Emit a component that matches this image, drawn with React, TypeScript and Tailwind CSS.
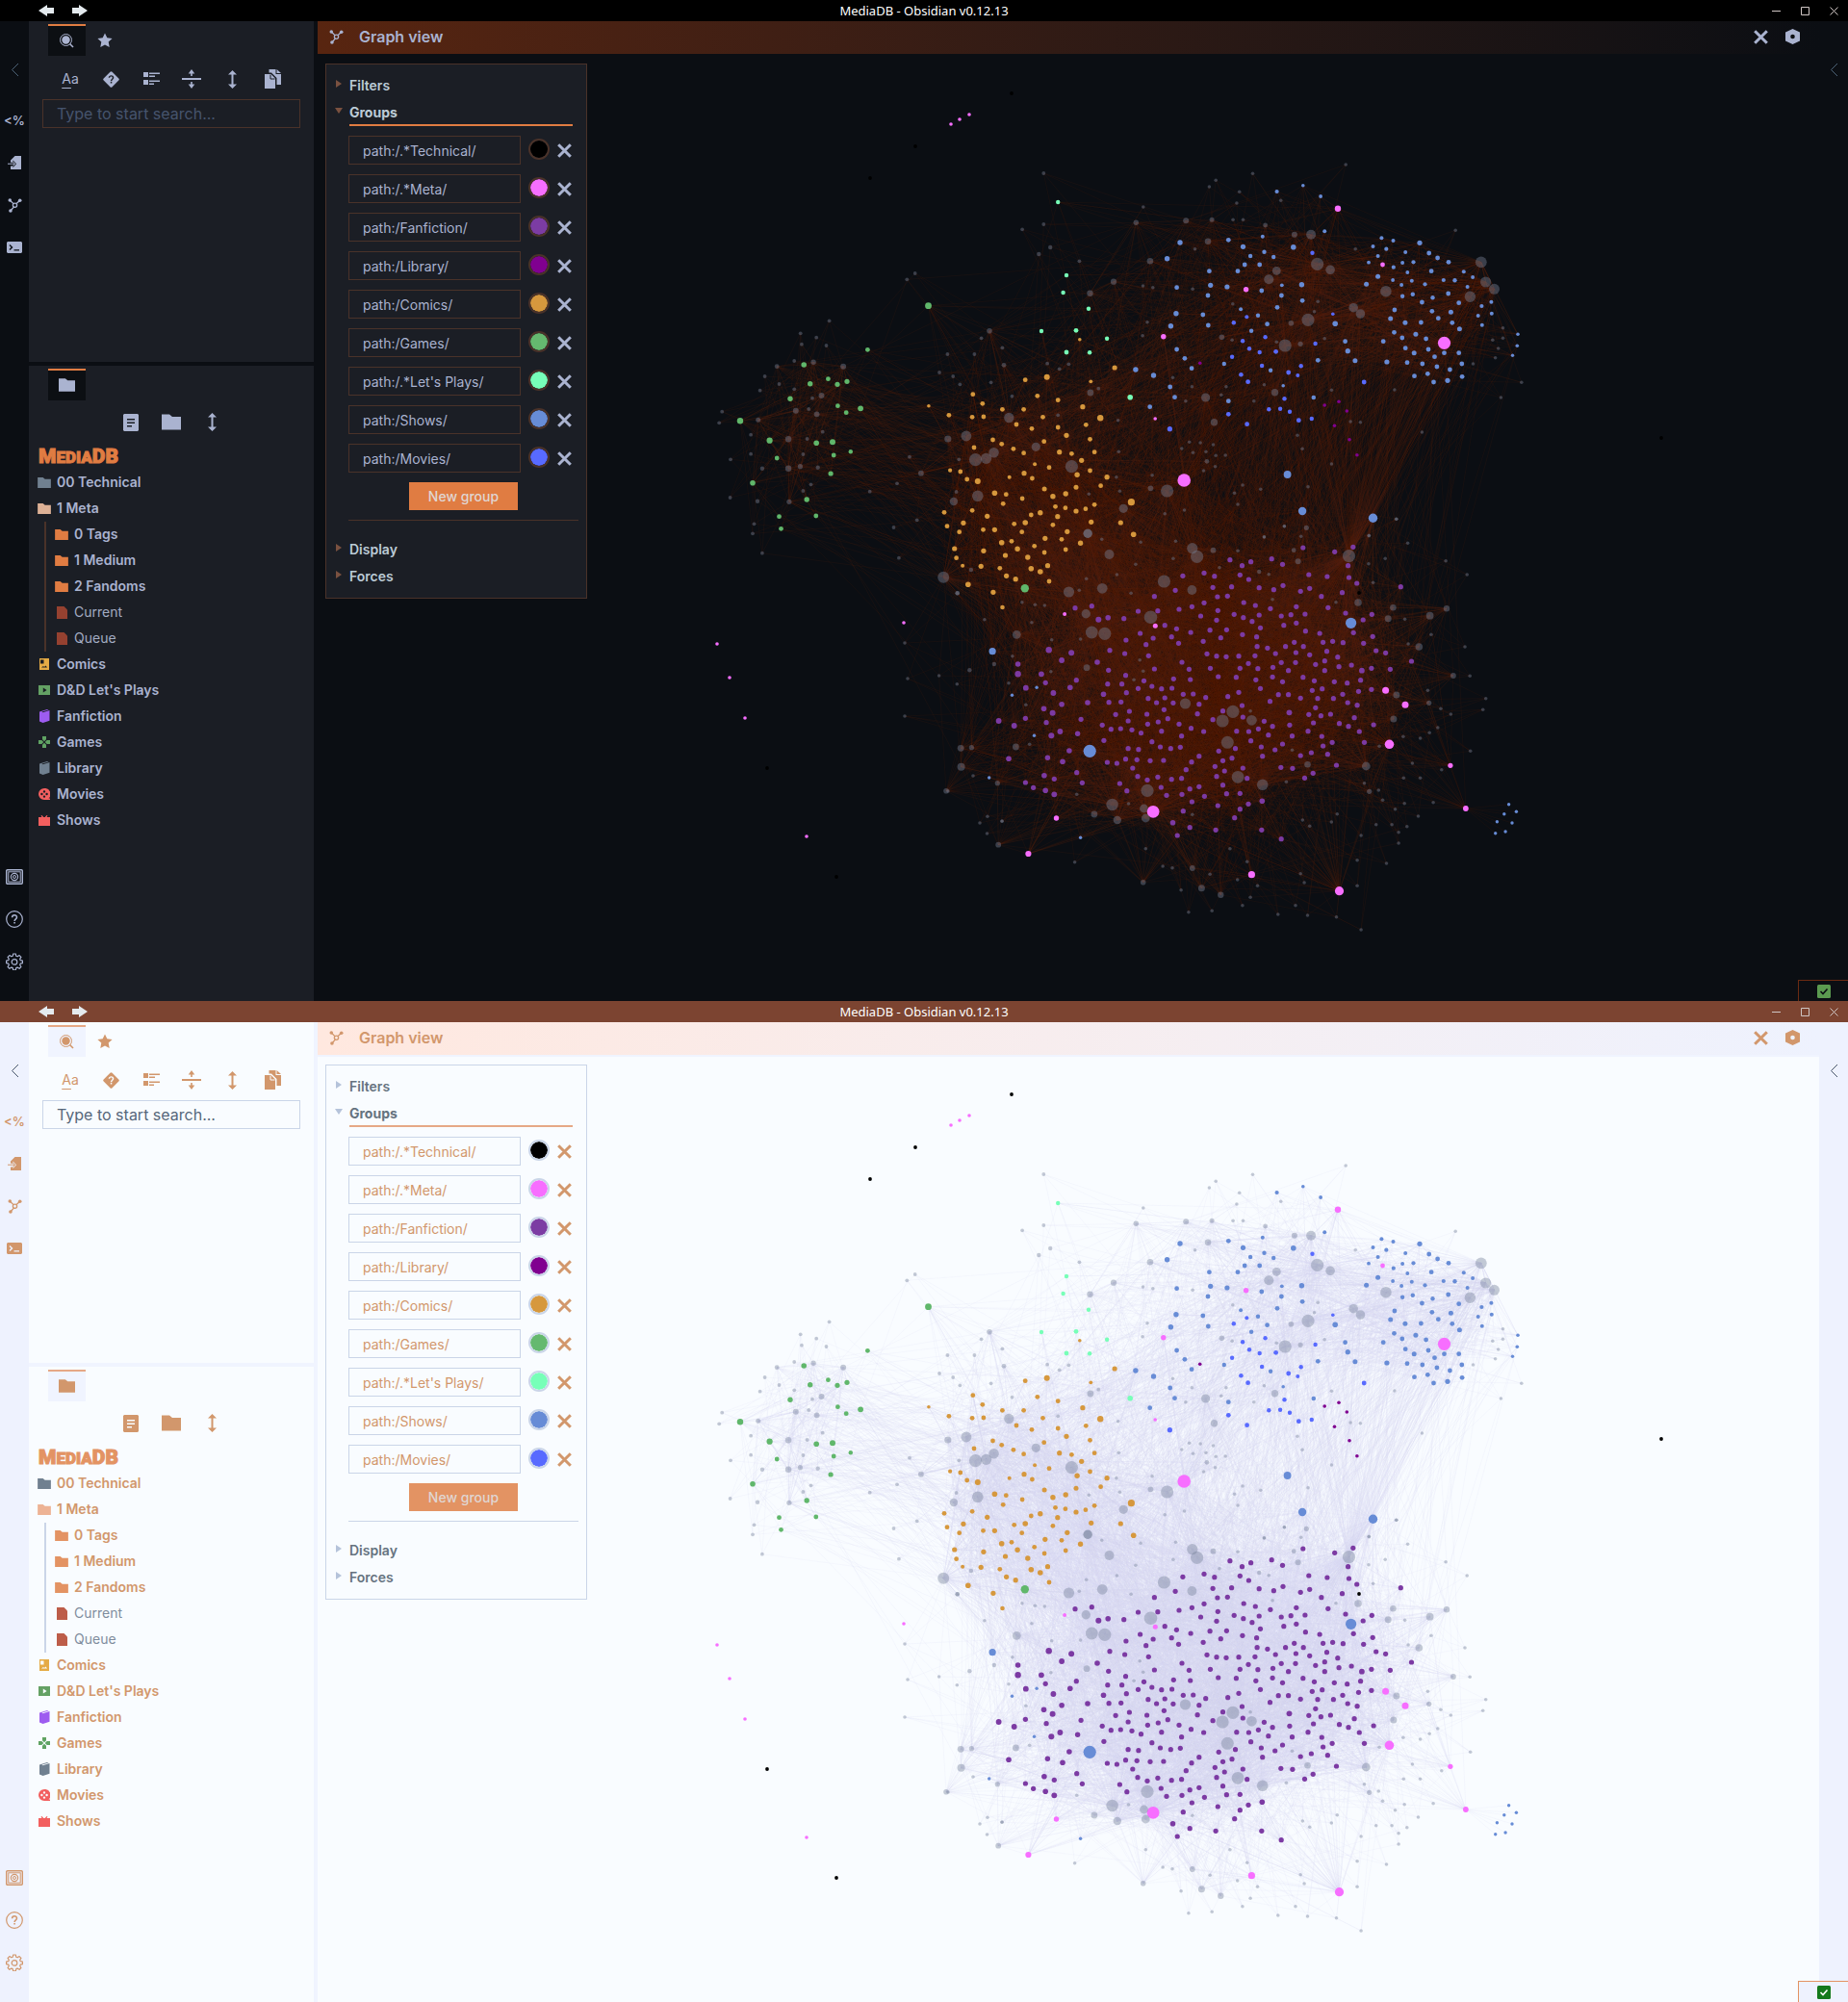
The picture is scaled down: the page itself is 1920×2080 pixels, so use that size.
import React from "react";

/* ------------------------------------------------------------------ */
/* Graph data                                                          */
/* ------------------------------------------------------------------ */

type Kind =
  | "technical"
  | "meta"
  | "fanfiction"
  | "library"
  | "comics"
  | "games"
  | "plays"
  | "shows"
  | "movies"
  | "plain";

interface GraphNode {
  x: number;
  y: number;
  r: number;
  kind: Kind;
}

interface Patch {
  origin: [number, number];
  unit: [number, number];
  sets: [Kind, number, string][];
}

/* Every patch of the vault keeps its own origin and units per pixel; nodes read "x,y" or "x,y,radius". */
const patches: Patch[] = [
  {
    origin: [0, 0],
    unit: [1, 1],
    sets: [
      ["meta", 1.8, "988,129 997,124 1007,119 745,669 758,704 774,746 838,869 939,647"],
      ["technical", 1.9, "1051,97 951,152 904,185 1726,455 797,798 869,911 1412,616"],
      ["plain", 1.8, "940,668 943,705 940,744 1011,806 985,822 1018,855 1041,853"],
    ],
  },
  {
    origin: [720, 140],
    unit: [2.6133, 3],
    sets: [
      [
        "games",
        2.4,
        "128,892,3.2 162,1085,2.8 208,953,3.1 228,1008 234,1190 239,1228 264,823,2.7 301,717,2.8 318,776,2.7 367,761 392,778,2.6 418,769,2.6 393,845 416,866 455,853,2.9 474,670 639,533,3.4 335,961,2.8 379,958,3 382,999 428,988,2.2 374,1056,2.6 309,1137,2.7 334,1188 901,1414,4.2",
      ],
      [
        "plays",
        2.2,
        "991,210 1014,438 1005,492 1074,542 946,612 1040,610,2.4 1124,635 1014,678,2.4 1077,679 1187,818,2.8",
      ],
      [
        "comics",
        2.4,
        "640,845,1.8 695,874 760,809 786,838 758,880 789,879 840,856 898,856 902,764 961,755,3 935,814 991,827 950,880 878,903 920,916 991,912 1050,638,1.8 1145,726,2.6 1080,769,1.9 1058,848,2.6 1106,883,3.2 1067,904 1014,937,2.6 1078,949 814,951 838,964 763,975 870,979 898,992 953,956 995,989,2.6 1028,994 1090,989 1055,1015,2.6 928,1027,2 967,1037 1078,1047 698,1046,2.1 726,1050 744,1074 773,1080,3 899,1055,2.6 921,1071 859,1067,2 1043,1060,2.7 1124,1067,2.6 1107,1094 1040,1099,2.5 954,1104,2.5 819,1117,2.8 850,1121 894,1134 977,1127,2.7 1012,1119,2.7 842,1150 984,1159 1011,1163 1040,1173,2.6 1066,1166 1090,1153 1190,1145,3.6 682,1177 758,1171 799,1189,2.6 943,1178,2.7 918,1185 990,1190,2.6 690,1220 734,1210,2.6 902,1209,2.8 872,1213 977,1216 1081,1207,2.6 1161,1209,2.6 1196,1246,2.8 723,1238 788,1231 819,1231,2.6 893,1238 1016,1237,2.6 956,1258,2.6 1001,1261 865,1267 838,1271,2.8 1052,1273,2.7 927,1282 881,1291,2.7 1012,1293 710,1290,2.6 789,1297,2.6 954,1302 848,1311,2.6 909,1317,2.7 715,1319 732,1343,2 782,1345,2.6 833,1351 963,1343,2.6 918,1352,2.8 943,1362,2.8 851,1375,2.6 876,1385,2.6 967,1392 747,1402,2.8 815,1426,2.6",
      ],
      [
        "plain",
        1.9,
        "952,120 952,279 894,295 970,351,2.2 939,372,2.2 603,432 581,451 370,580 292,619 335,632 295,653 362,657 275,705 327,709,2.7 228,722,2.4 408,722,3 195,753 234,777 182,797 275,793 324,821 349,813,3 314,855 279,860,3 336,871,2.9 79,863 71,898 177,889,2.5 157,935 352,926 259,949,3.2 310,948 157,995 299,996 102,1012 188,1040,2.2 259,1040,3.2 291,1034,2.6 339,1037,2.2 320,1090 299,1110 101,1131 175,1142,2.2 261,1144,2.6 166,1213 162,1243 188,1304 480,1112 554,1087 588,1004 619,1055,2.9 608,1201 545,1224 559,1319 805,611,2.8 783,634 840,664 691,684 764,684 844,718,2.4 962,713 669,741 706,753 725,778 809,772 866,815 991,874 858,882,5.2 742,939,5.4 692,948,3.6 817,991,5.2 796,1009,5.6 767,1013,6.6 931,973,4.6 1028,1034,6.6 722,1012 715,1113 773,1126,5.8 708,1143,4.2 680,1379,6 718,1429,2.3 755,1356,2.2 1142,458,3.1 1078,494,3.2 1049,394 1203,274,2.7 1241,394,3.3 1079,804,3.4 1101,791 1020,715 995,730",
      ],
    ],
  },
  {
    origin: [1100, 140],
    unit: [2.9037, 3],
    sets: [
      [
        "shows",
        2.4,
        "658,177,2.1 737,158,1.8 790,192,1.9 802,301,2 615,317,2 708,350,2.8 620,365,2.2 648,381,2.2 578,378,2.2 556,349,2.6 512,328 366,336,2.7 327,386,2.7 561,405 606,405 540,425 454,425 458,469,2.6 508,474,2.6 356,476 450,501 612,486 673,469,1.9 672,501 733,467,2.7 735,517 659,538 549,544,2 601,563,2.2 629,590 581,611,2.2 354,557,2.7 435,561 338,596,2.7 451,594 356,669 380,697 401,728 232,732,2.7 286,750,2.7 336,786 350,818 275,848 499,714,2.2 639,734,2.2 677,782,1.8 512,830 769,819,2.3 834,589,2.8 864,644 872,674,2.6 894,704,2.5 782,703 974,322,2 1009,330,2 948,348,2 988,356,2.1 963,378,2 935,398,1.9 1046,366,2 1089,337,2.6 1117,369 1143,384 1176,397 1070,397,2.1 1037,399,2 1010,413,2.1 1052,429,1.9 1124,425 1222,427,2 1249,444,2 963,442,2.5 1008,453,1.9 1065,455,2 1034,468,2 1105,466,2.1 1161,453,2.1 1195,454,2.2 1233,474,2 928,466,2.5 1037,503,2.2 1068,497,2.2 1096,522 1128,508,2.2 1175,495 1207,524 1276,534,2.1 1305,521,2 1306,557,2 1265,564,2 1277,593,2 1013,546 1126,550 1183,553,2.5 1001,573,2.5 1045,586,2.5 1093,585 1145,572 1187,586 1209,605,2.5 1012,616 1077,622,2.5 1036,633 1108,636 979,644 1046,665 1115,669 1072,680,2.5 1163,680 1207,680 1134,692 990,708,2.6 1051,710 1097,714 1141,723 1216,714 1180,732 1113,745 1073,752 1217,754 1131,771 1173,766,2.6 1385,622,1.8 1383,658,1.8 1369,688,1.7 690,1059,3.9 735,1173,4.2 948,1195,4.7",
      ],
      [
        "movies",
        2.2,
        "765,368 827,559,1.8 567,568,2 528,586 623,631 555,643 575,667 606,678 655,676,2.4 523,692 774,651 613,720 731,721 693,741,2.4 721,750,2 550,748,2.3 571,770,2.4 681,823 634,856 668,854 697,863 724,890,2.4 763,885,2.2 512,871,2.4 568,902,2.4 335,917,2.6 921,771,2.4",
      ],
      ["library", 1.8, "426,712 802,843 845,832 869,861 832,907 877,950 900,998"],
      [
        "meta",
        2.2,
        "842,230,3.2 565,482,2.7 977,405,2.4 316,629,2.7 291,885,1.8 1163,649,6.6 378,1077,6.8",
      ],
      [
        "plain",
        1.8,
        "866,93 585,121 474,142 454,162 545,178 537,213 670,205 255,225 384,268,3 462,265,2.5 526,265 556,265 623,282,2.4 711,311,3 761,311,5 450,332,3.3 411,356 895,356 1197,298 780,403,6.6 819,421,4.8 657,424,4.4 634,451,5 987,488,5.8 889,539,4.8 910,558,4.8 1274,397,5.9 1288,459,5.6 1314,481,5.5 1241,505,5.7 752,577,6.6 683,657,6.6 701,587,2.8 771,551 782,520 525,527 729,652,2.6 657,646 802,635 492,631,2.8 523,640 267,584 253,626 254,471 284,476 404,481 1340,602 1340,634 1309,640 1326,666 1317,695 1250,714 1396,772 1334,819 1096,927 1013,795 823,796 652,803,3.7 620,779 589,830 505,785 490,811 443,819,4.6 383,830 402,785 344,757 469,896,3.7 179,890 181,988 371,978 394,958 427,960 466,966 405,991 444,988 474,1000 503,999 447,1018,2.4 472,1034 437,1047 282,1061 174,1067 184,1111 277,1102,2.9 327,1110,6.6 195,1165,4.6 379,1170 320,1181 555,1092 609,1105 530,1117 540,1152 752,1097 720,937 735,979 823,1026 910,896 880,894 681,1220 747,1225,2.6 731,1252 620,1253 88,1243,4.7 1018,1198 936,1250 91,1120",
      ],
    ],
  },
  {
    origin: [960, 520],
    unit: [2.3059, 3],
    sets: [
      ["comics", 2.3, "188,333"],
      [
        "shows",
        1.7,
        "1023,382,5.6 397,781,6.6 164,470,3.6 270,583 211,607 264,733 156,864 375,1051 1401,947 1419,970 1390,977 1373,1001 1409,1005 1369,1037 1393,1032",
      ],
      [
        "meta",
        2.7,
        "337,354,2 554,391,2.5 1106,592,3.5 1153,637,3.5 1115,760,4.8 1261,826,2.6 1298,960,2.9 549,970,6.4 317,990 250,1101,3.1 785,1166,3.6 995,1217,4.6",
      ],
      [
        "fanfiction",
        2.6,
        "908,147 1028,145 984,160 733,185 783,191 833,182 762,203 859,199 1016,203 620,235 671,226 696,236 757,232 778,246 922,231 966,237 1018,240 1037,258 1142,269 552,299 602,280 692,271 737,269 803,272 860,265 838,278 924,274 902,283 952,299 1002,287 703,300 727,298 671,319 766,318 794,327 611,339 642,331 704,343 830,337 892,331 968,334 362,335 402,329 513,345 560,344 663,360 743,355 765,365 803,357 856,360 879,356 913,354 1010,351 1073,355 418,371,3 441,365,2.8 479,368 701,373 786,377 862,389 892,382 1052,372 577,389 605,400 806,397 639,411 685,404 725,403 763,418 797,425 914,407 948,414 1029,412 1075,424 518,414 593,425 549,429 711,428 669,439 610,445 484,435 532,449 887,442 956,442 979,439 1004,443 1053,445 798,455 823,460 866,455 909,455 299,466,3.2 353,475,3 445,467 481,477 538,484 678,478 701,485 724,487 754,485 793,484 842,477 891,474 924,481 965,470 991,488 1083,468 1106,475 1168,501 330,498,2.9 415,504,2.8 225,510,2.8 225,541,3.2 281,541,2.9 618,504 777,508 856,505 890,505 938,511 960,500 442,529 552,525 635,526 686,523 757,523 800,524 836,520 873,530 994,518 1024,513 1049,530,2.9 1072,523 1117,526 960,530 365,560 483,545 527,562 598,556 638,558 705,549 748,551 795,559 835,550 859,565 908,551 935,562 983,565 1014,569 1046,560 291,568 244,584,2.9 350,583,2.8 440,572 474,572 513,586 546,579 569,587 594,585 806,586 930,592 954,587 1072,589 1041,595 310,600,2.9 430,604,2.8 485,599 621,604 645,603 675,614 728,611 754,598 849,605 873,605 902,616 943,617 981,617 1003,604 330,635,2.8 392,630,2.8 443,629 472,628 537,617 577,615 557,630 597,631 659,635 762,639 829,626 1015,630 1038,638 287,649,2.8 308,662,3 459,667 492,657 534,666 575,652 655,665 716,656 875,661,2.9 922,667 938,646 951,671 974,666 243,679 179,687,2.9 216,702,2.9 293,692 376,682 489,687 561,690 584,680 692,683 764,675 815,688 1031,677 427,700 448,713 471,711 498,715 536,697 611,697 640,710 801,712 835,704 876,700 933,693 995,695 1017,704 1077,699 326,720,2.9 305,733,3 368,727,2.7 520,725 569,719 670,720 749,719 778,720 920,719 1043,720 825,731 882,734 953,735 431,748 546,752 617,734 783,749 859,759 1055,754 978,754 956,765 348,780,2.8 489,773 514,776 566,768 591,773 614,769 706,781 746,773 808,768 841,777 928,786 967,791 902,795 811,797 203,805,2.8 296,802,2.7 332,814,2.8 439,816 462,819 483,806 510,808 542,811 574,810 659,797 641,815 738,803 716,811 500,834 628,839 697,829 720,843 764,834 855,832 883,835 988,825 932,850 912,865 288,857,2.8 312,868 366,848 512,860 535,871 560,862 593,869 617,866 701,860 774,866 243,879 262,895 291,904,2.8 312,916,2.9 379,880 469,882 486,905 568,894 581,919 618,916 637,899 659,892 716,887 725,914 757,913 672,922 642,939 704,951 777,946 810,937,2.8 757,962 621,968 596,1004,2.8 637,1019 744,989 699,1027 809,1027 607,1044 856,1055",
      ],
      [
        "plain",
        1.8,
        "643,149,5.6 654,175,6.6 575,252,6.6 642,279,4.9 1018,173,6.6 444,168,5 427,274,5.4 347,285,5.6 392,103,4.6 388,353,4.7 543,364,6.8 402,411,6.4 433,415,6.6 222,418,4.4 390,521,3.4 626,633,5.6 740,658,6.6 715,687,6.6 785,685,5.4 727,754,6.5 752,862,6.4 811,886,5.8 535,904,6.6 451,948,6.2 527,960,4.4 531,990,4.4 463,996,4.2 408,978,3.4 88,772,3.4 114,770,2.6 89,830,4 53,905,2.8 220,768,3.4 176,881,2.6 178,1073,2.9 919,823,3.3 1059,828,4.4 1067,907,2.6 1040,318,3.8 1124,334,3.3 1112,368,3.5 1212,359,3.9 1252,337,3.2 1186,456,3.8 1268,546,2.9 1132,606,3.5 1210,631,2.6 1125,681,3.5 643,1146,2.9 525,1190,2.8 665,1208,3.5 711,1229,3.2 693,155,2.9 896,190,3 886,155,2.4 803,222,2.2 80,289,2.2 426,121 519,130 597,181 603,127 507,199 462,231 389,244 372,280 496,289 266,325 289,327 235,317 145,371 258,380 306,434 375,432 212,485 168,510,2.2 109,529,2.2 36,546 79,572 203,569 304,533 517,497 525,532 503,559 244,637 253,760 366,916 152,985 187,1000 151,1038 361,1127 531,1085 572,1140 595,1145 685,1165 733,1085 774,1126 751,1182 799,1201 782,1237 763,1262 690,1279 634,1283 616,1214 902,1163 911,1191 890,1262 848,1290 919,1293 988,1298 1047,1338 1038,1121 1108,1131 1038,1201 1137,1068 1137,1034 1157,1016 1121,1010 1083,1010 1047,1044 990,977 976,1002 924,1015 907,996 868,877 882,778 1055,881 1089,903 1099,934 1129,962 1151,944 1184,984 1220,941 1149,865 1189,865 1170,819 1240,839 1309,781 1189,741 1148,736 1211,724 1231,708 1262,666 1238,649 1207,592 1308,547 1346,617 1339,652 1296,456 1215,418 1160,447 1152,370 1301,231 1250,188 1159,133 1105,181 1065,197 1132,58 1066,109 1076,256 987,317 835,308 826,230 708,209 863,80 752,157 815,114 1091,766 782,656 490,945 643,979",
      ],
    ],
  },
];

const nodes: GraphNode[] = patches.flatMap(({ origin, unit, sets }) =>
  sets.flatMap(([kind, base, list]) =>
    list.split(" ").map((entry) => {
      const [x, y, r] = entry.split(",").map(Number);
      return {
        x: Math.round((origin[0] + x / unit[0]) * 10) / 10,
        y: Math.round((origin[1] + y / unit[1]) * 10) / 10,
        r: r || base,
        kind,
      };
    }),
  ),
);

const fanOut: Record<Kind, number> = {
  technical: 0,
  meta: 20,
  fanfiction: 22,
  library: 6,
  comics: 20,
  games: 8,
  plays: 8,
  shows: 12,
  movies: 10,
  plain: 4,
};

/* Deterministic links: notes point at their neighbours and at hubs further away, so crowded regions fill in. */
function buildLinks(): string[] {
  let seed = 20210;
  const random = () => {
    seed = (seed * 1664525 + 1013904223) % 4294967296;
    return seed / 4294967296;
  };
  const linked = nodes.slice(15);
  const hubs = linked.filter((n) => n.r >= 4.2);
  const mids = linked.filter((n) => n.r >= 2.5);
  const pick = (from: GraphNode, pool: GraphNode[], reach: number) => {
    const weights = pool.map((p) =>
      p === from ? 0 : p.r * Math.exp(-Math.hypot(p.x - from.x, p.y - from.y) / reach),
    );
    let mark = random() * weights.reduce((a, b) => a + b, 0);
    let i = 0;
    while (i < pool.length - 1 && (mark -= weights[i]) > 0) i++;
    return pool[i];
  };
  const near = (x: number, y: number) =>
    linked.find((n) => Math.abs(n.x - x) < 1 && Math.abs(n.y - y) < 1);
  const segment = (a: GraphNode, b: GraphNode) => `M${a.x} ${a.y}L${b.x} ${b.y}`;
  const gate = near(1522.9, 840);
  const paths = linked.map((node) => {
    if (gate && node.x > 1545 && node.y > 800) return segment(node, gate);
    const leaf = node.kind === "plain" && node.r < 2.4;
    const far = node.x < 900 ? 8 : leaf ? 4 : 3;
    const count = node.kind === "plain" && !leaf ? 22 : fanOut[node.kind];
    let d = "";
    for (let i = 1; i <= count; i++) {
      d += segment(node, i % far === 0 ? pick(node, hubs, 150) : pick(node, mids, leaf ? 60 : 80));
    }
    return d;
  });
  const anchor = near(1401.5, 577.7);
  if (anchor) {
    linked
      .filter((n) => n.y < 400 && n.x > 1330 && n.r > 1.9)
      .forEach((n) => paths.push(segment(anchor, n)));
    linked
      .filter((n) => n.kind === "fanfiction")
      .forEach((n, i) => i % 2 === 0 && paths.push(segment(anchor, n)));
  }
  return paths;
}

const links = buildLinks();

const fills: Record<Kind, string> = {
  technical: "fill-black",
  meta: "fill-[#f76eff]",
  fanfiction: "fill-[#7c3aa3]",
  library: "fill-[#800090]",
  comics: "fill-[#d6983d]",
  games: "fill-[#60b76b]",
  plays: "fill-[#77ffb8]",
  shows: "fill-[#678cd6]",
  movies: "fill-[#586aff]",
  plain: "fill-[var(--node)]",
};

function Graph() {
  return (
    <svg
      role="img"
      aria-label="Graph of linked notes"
      viewBox="330 58 1560 982"
      preserveAspectRatio="xMidYMid slice"
      className="absolute inset-0 h-full w-full"
    >
      <g fill="none" className="stroke-[var(--link)]" strokeWidth="1">
        {links.map((d, i) => (
          <path key={i} d={d} />
        ))}
      </g>
      {nodes.map((n, i) => (
        <circle key={i} cx={n.x} cy={n.y} r={n.r} className={fills[n.kind]} />
      ))}
    </svg>
  );
}

/* ------------------------------------------------------------------ */
/* Icons                                                               */
/* ------------------------------------------------------------------ */

interface IconProps {
  w: number;
  h: number;
  box?: string;
  className?: string;
  children: React.ReactNode;
}

function Icon({ w, h, box, className, children }: IconProps) {
  return (
    <svg
      width={w}
      height={h}
      viewBox={box ?? `0 0 ${w} ${h}`}
      fill="currentColor"
      aria-hidden="true"
      className={className ?? "shrink-0"}
    >
      {children}
    </svg>
  );
}

const ArrowLeft = () => (
  <Icon w={16} h={12}>
    <path d="M0 6 9 0v3h7v6H9v3z" />
  </Icon>
);
const ArrowRight = () => (
  <Icon w={16} h={12}>
    <path d="M16 6 7 0v3H0v6h7v3z" />
  </Icon>
);
const Chevron = () => (
  <Icon w={9} h={15}>
    <path d="M8 1 1.500 7.500 8 14" fill="none" stroke="currentColor" />
  </Icon>
);
const SearchIcon = () => (
  <Icon w={15} h={15}>
    <circle cx="6.500" cy="6.500" r="4.200" />
    <circle cx="6.500" cy="6.500" r="6" fill="none" stroke="currentColor" />
    <path d="M10.500 10.500 14 14" stroke="currentColor" strokeWidth="1.600" />
  </Icon>
);
const StarIcon = () => (
  <Icon w={16} h={16}>
    <path d="m8 .4 2.300 4.800 5.300.7-3.900 3.600 1 5.400L8 12.500l-4.700 2.400 1-5.400L.4 5.900l5.300-.7z" />
  </Icon>
);
const QueryIcon = () => (
  <Icon w={17} h={17}>
    <path
      fillRule="evenodd"
      d="M7.400.7a1.600 1.600 0 0 1 2.200 0l6.700 6.700a1.600 1.600 0 0 1 0 2.200l-6.700 6.700a1.600 1.600 0 0 1-2.200 0L.7 9.600a1.600 1.600 0 0 1 0-2.200zM5.700 6.800h1.500c0-1.700 2.600-1.600 2.600 0 0 1.300-2 1.400-2 3.400h1.500c0-1.500 2-1.700 2-3.500 0-3.300-5.600-3.300-5.600.1zm2.100 4.300v1.500h1.500v-1.500z"
    />
  </Icon>
);
const ResultsIcon = () => (
  <Icon w={18} h={16}>
    <path d="M1 1h5v5H1zM1 9h5v5H1zM7 1.500h11V3H7zM7 4.500h6V6H7zM7 9.500h11V11H7zM7 12.500h5V14H7z" />
  </Icon>
);
const SplitIcon = () => (
  <Icon w={20} h={20}>
    <path d="M0 9h20v2H0zM9.200 7V4.500H6.700L10 0l3.300 4.500h-2.500V7zM9.200 13v2.500H6.700L10 20l3.300-4.500h-2.500V13z" />
  </Icon>
);
const SortIcon = () => (
  <Icon w={11} h={19}>
    <path d="M4.500 4.500H1L5.500 0 10 4.500H6.500v10H10L5.500 19 1 14.500h3.500z" />
  </Icon>
);
const CopyIcon = () => (
  <Icon w={17} h={20}>
    <path d="M0 5h6.500L11 9.500V20H0z" />
    <path d="M4.500 3.500V0h7v5h5.500v11h-4.500V9L7 3.500zM12.500 0 17 4h-4.500z" />
    <path d="M6 5.500v4.500h4.500" className="stroke-[var(--side)]" fill="none" />
  </Icon>
);
const FolderIcon = ({ w = 14, h = 11 }: { w?: number; h?: number }) => (
  <Icon w={w} h={h} box="0 0 20 16">
    <path d="M0 0h8l3 2.500h9V16H0z" />
  </Icon>
);
const NoteIcon = () => (
  <Icon w={16} h={18}>
    <path
      fillRule="evenodd"
      d="M1 0h14l1 1v16l-1 1H1l-1-1V1zm3 5v1.500h8V5zm0 3.500V10h8V8.500zM4 12v1.500h5V12z"
    />
  </Icon>
);
const ImportIcon = () => (
  <Icon w={14} h={14}>
    <path fillRule="evenodd" d="M7.500 0H14v14H3v-3.500h2.500V12L9 8.200 5.500 4.500V6.800H3V4.500L7.500 0z" />
    <path d="M0 8.200h7.500M5.500 6l2 2.200-2 2.300" stroke="currentColor" fill="none" />
  </Icon>
);
const GraphIcon = () => (
  <Icon w={15} h={15} box="0 0 44 46">
    <path
      d="m6 6 12 12M38 7 27 17M19 27 8 40"
      stroke="currentColor"
      strokeWidth="4"
      fill="none"
    />
    <circle cx="22" cy="22" r="6.500" fill="none" stroke="currentColor" strokeWidth="4" />
    <circle cx="6" cy="6" r="5.500" />
    <circle cx="38" cy="7" r="5.500" />
    <circle cx="8" cy="40" r="5.500" />
  </Icon>
);
const TerminalIcon = () => (
  <Icon w={16} h={12}>
    <path
      fillRule="evenodd"
      d="M1 0h14l1 1v10l-1 1H1l-1-1V1zm1.500 4 2 2-2 2 1 1L6.500 6l-3-3zm5 4.200v1.300H13V8.200z"
    />
  </Icon>
);
const VaultIcon = () => (
  <Icon w={18} h={16}>
    <rect x=".7" y=".7" width="16.600" height="14.600" rx="1" fill="none" stroke="currentColor" strokeWidth="1.400" />
    <rect x="2.800" y="2.800" width="12.400" height="10.400" fill="none" stroke="currentColor" />
    <circle cx="9" cy="8" r="3.600" fill="none" stroke="currentColor" strokeWidth="1.200" />
    <circle cx="9" cy="8" r="1.500" fill="none" stroke="currentColor" />
  </Icon>
);
const HelpIcon = () => (
  <Icon w={18} h={18}>
    <circle cx="9" cy="9" r="8.300" fill="none" stroke="currentColor" strokeWidth="1.200" />
    <path
      d="M6.600 7.200C6.600 4 11.500 4 11.500 7c0 1.800-2.400 1.900-2.400 4"
      fill="none"
      stroke="currentColor"
      strokeWidth="1.500"
    />
    <path d="M8.300 12h1.600v1.600H8.300z" />
  </Icon>
);
const GearIcon = () => (
  <Icon w={18} h={18}>
    <path
      d="m7.700 1h2.600l.5 2.300 1.300.5 2-1.200 1.800 1.800-1.200 2 .5 1.300 2.200.5v2.500l-2.200.5-.5 1.300 1.200 2-1.800 1.800-2-1.200-1.300.5-.5 2.200H7.700l-.5-2.200-1.300-.5-2 1.200-1.800-1.800 1.200-2-.5-1.300L.6 10.700V8.200l2.200-.5.5-1.300-1.200-2 1.800-1.800 2 1.200 1.300-.5z"
      fill="none"
      stroke="currentColor"
      strokeWidth="1.200"
      strokeLinejoin="round"
    />
    <circle cx="9" cy="9.400" r="2.800" fill="none" stroke="currentColor" strokeWidth="1.200" />
  </Icon>
);
const CrossIcon = () => (
  <Icon w={15} h={15}>
    <path d="m1.200 1.200 12.600 12.600M13.800 1.200 1.200 13.800" stroke="currentColor" strokeWidth="3" />
  </Icon>
);
const HexIcon = () => (
  <Icon w={15} h={16}>
    <path fillRule="evenodd" d="M7.500 0 15 3.500v9L7.500 16 0 12.500v-9zm0 5.700a2.300 2.300 0 1 0 0 4.600 2.300 2.300 0 0 0 0-4.600z" />
  </Icon>
);
const FileIcon = () => (
  <Icon w={11} h={13}>
    <path d="M0 0h7.500L11 3.500V13H0z" />
  </Icon>
);
const ComicIcon = () => (
  <Icon w={10} h={12}>
    <path fillRule="evenodd" d="M0 0h10v12H0zm1 1.500v4h3.500v-4zm1 8h6L6.500 7.500 5 9 4 8z" />
  </Icon>
);
const PlayIcon = () => (
  <Icon w={12} h={10}>
    <path fillRule="evenodd" d="M0 0h12v10H0zm4.800 2.500v5L8.600 5z" />
  </Icon>
);
const BookIcon = () => (
  <Icon w={11} h={14}>
    <path d="M0 2.500 8 0l1.500.4L2.500 2.600l1 .6L10.500 1v10.800L3.600 14 0 12.500z" />
  </Icon>
);
const PadIcon = () => (
  <Icon w={12} h={12}>
    <path d="M4 0h4v3.300l-2 2-2-2zM4 12h4V8.700l-2-2-2 2zM0 4v4h3.300l2-2-2-2zM12 4v4H8.700l-2-2 2-2z" />
  </Icon>
);
const ReelIcon = () => (
  <Icon w={12} h={12}>
    <path
      fillRule="evenodd"
      d="M6 0a6 6 0 0 1 4.500 10.500H12V12H6A6 6 0 0 1 6 0zm0 2.200a1.200 1.200 0 1 0 0 2.400 1.200 1.200 0 0 0 0-2.400zM3.400 4.800a1.200 1.200 0 1 0 0 2.400 1.200 1.200 0 0 0 0-2.400zm5.200 0a1.200 1.200 0 1 0 0 2.400 1.200 1.200 0 0 0 0-2.400zM6 7.400a1.200 1.200 0 1 0 0 2.400 1.200 1.200 0 0 0 0-2.400z"
    />
  </Icon>
);
const TvIcon = () => (
  <Icon w={12} h={11}>
    <path d="M0 2h3.500L2.500.5 3.500 0l1.800 2h1.400l1.800-2 1 .5-1 1.500H12v9H0z" />
  </Icon>
);
const CheckIcon = () => (
  <Icon w={14} h={14}>
    <rect width="14" height="14" rx="1.500" />
    <path d="m3.500 7 2.500 2.500 4.500-5" fill="none" strokeWidth="1.600" className="stroke-[var(--tick)]" />
  </Icon>
);

/* ------------------------------------------------------------------ */
/* Interface                                                           */
/* ------------------------------------------------------------------ */

function IconButton({
  label,
  className,
  children,
}: {
  label: string;
  className: string;
  children: React.ReactNode;
}) {
  return (
    <button
      type="button"
      aria-label={label}
      className={`flex shrink-0 cursor-pointer items-center justify-center ${className}`}
    >
      {children}
    </button>
  );
}

function TitleBar() {
  return (
    <header className="grid h-[22px] shrink-0 grid-cols-3 items-center bg-[var(--title)] text-[#e4eaee]">
      <div className="flex items-center gap-[19px] pl-10">
        <button type="button" aria-label="Back">
          <ArrowLeft />
        </button>
        <button type="button" aria-label="Forward">
          <ArrowRight />
        </button>
      </div>
      <h1 className="text-center font-['Noto_Sans',sans-serif] text-[13px] leading-[22px] text-white">
        MediaDB - Obsidian v0.12.13
      </h1>
      <div className="flex items-center justify-end text-[#cfc6c4]">
        <IconButton label="Minimize" className="h-[22px] w-[30px]">
          <Icon w={9} h={9}>
            <path d="M0 4h9v1H0z" />
          </Icon>
        </IconButton>
        <IconButton label="Maximize" className="h-[22px] w-[30px]">
          <Icon w={9} h={9}>
            <path d="M.5.5h8v8h-8z" fill="none" stroke="currentColor" />
          </Icon>
        </IconButton>
        <IconButton label="Close window" className="h-[22px] w-[30px]">
          <Icon w={9} h={9}>
            <path d="m.5.500 8 8m0-8-8 8" stroke="currentColor" />
          </Icon>
        </IconButton>
      </div>
    </header>
  );
}

function Ribbon() {
  const slot = "h-11 w-full";
  return (
    <nav aria-label="Ribbon" className="flex w-[30px] shrink-0 flex-col bg-[var(--ribbon)] pt-7 pb-[19px] text-[var(--ink)]">
      <IconButton label="Collapse left sidebar" className="h-11 w-full text-[var(--chevron)]">
        <Chevron />
      </IconButton>
      <div className="mt-[9px] flex flex-col">
        <IconButton label="Templates" className={slot}>
          <span className="text-[13px] leading-4 font-semibold">&lt;%</span>
        </IconButton>
        <IconButton label="Import note" className={slot}>
          <ImportIcon />
        </IconButton>
        <IconButton label="Open graph view" className={slot}>
          <GraphIcon />
        </IconButton>
        <IconButton label="Command palette" className={slot}>
          <TerminalIcon />
        </IconButton>
      </div>
      <div className="mt-auto flex flex-col">
        <IconButton label="Open another vault" className={slot}>
          <VaultIcon />
        </IconButton>
        <IconButton label="Help" className={slot}>
          <HelpIcon />
        </IconButton>
        <IconButton label="Settings" className={slot}>
          <GearIcon />
        </IconButton>
      </div>
    </nav>
  );
}

function SearchPane() {
  const tool = "h-8 w-[42px]";
  return (
    <section aria-label="Search" className="flex-[353] bg-[var(--side)] pt-[3px]">
      <div className="flex pl-5">
        <IconButton label="Search" className="h-[33px] w-[39px] border-t-2 border-[var(--accent-line)] bg-[var(--tab)]">
          <SearchIcon />
        </IconButton>
        <IconButton label="Starred" className="h-[33px] w-10">
          <StarIcon />
        </IconButton>
      </div>
      <div className="flex h-[45px] items-center justify-center pt-[3px]">
        <IconButton label="Match case" className={tool}>
          <span className="text-[14px] leading-5">
            <span className="underline underline-offset-4">A</span>a
          </span>
        </IconButton>
        <IconButton label="Explain search term" className={tool}>
          <QueryIcon />
        </IconButton>
        <IconButton label="Collapse results" className={tool}>
          <ResultsIcon />
        </IconButton>
        <IconButton label="Show more context" className={tool}>
          <SplitIcon />
        </IconButton>
        <IconButton label="Change sort order" className={tool}>
          <SortIcon />
        </IconButton>
        <IconButton label="Copy search results" className={tool}>
          <CopyIcon />
        </IconButton>
      </div>
      <div className="px-[14px]">
        <input
          type="text"
          aria-label="Search notes"
          placeholder="Type to start search..."
          className="h-[30px] w-full border border-[var(--line)] bg-transparent pl-[14px] text-[16px] leading-5 text-[var(--ink)] outline-none placeholder:text-[var(--hint)]"
        />
      </div>
    </section>
  );
}

function Row({
  icon,
  tone,
  children,
  file,
}: {
  icon: React.ReactNode;
  tone: string;
  children: React.ReactNode;
  file?: boolean;
}) {
  return (
    <a
      href="#"
      className={`flex h-[27px] items-center gap-[6px] pl-[9px] text-[14px] leading-5 ${
        file ? "text-[var(--file-text)]" : "font-semibold text-[var(--ink)]"
      }`}
    >
      <span className={`flex w-[14px] shrink-0 justify-center ${tone}`}>{icon}</span>
      {children}
    </a>
  );
}

function FilePane() {
  const tool = "h-8 w-[42px]";
  return (
    <section aria-label="File explorer" className="flex-[661] bg-[var(--side)] pt-[3px]">
      <div className="flex pl-5">
        <IconButton label="Files" className="h-[33px] w-[39px] border-t-2 border-[var(--accent-line)] bg-[var(--tab)]">
          <FolderIcon w={17} h={14} />
        </IconButton>
      </div>
      <div className="flex h-[46px] items-center justify-center">
        <IconButton label="New note" className={tool}>
          <NoteIcon />
        </IconButton>
        <IconButton label="New folder" className={tool}>
          <FolderIcon w={20} h={17} />
        </IconButton>
        <IconButton label="Change sort order" className={tool}>
          <SortIcon />
        </IconButton>
      </div>
      <h2 className="h-[26px] pl-[10px] font-[Roboto,sans-serif] text-[21px] leading-6 font-black text-[var(--accent)] [-webkit-text-stroke:1px_var(--accent)]">
        M<span className="text-[17px]">EDIA</span>DB
      </h2>
      <ul>
        <li>
          <Row icon={<FolderIcon />} tone="text-[#708090]">00 Technical</Row>
        </li>
        <li>
          <Row icon={<FolderIcon />} tone="text-[var(--open)]">1 Meta</Row>
          <ul className="ml-4 border-l-2 border-[var(--line)]">
            <li>
              <Row icon={<FolderIcon />} tone="text-[var(--accent)]">0 Tags</Row>
            </li>
            <li>
              <Row icon={<FolderIcon />} tone="text-[var(--accent)]">1 Medium</Row>
            </li>
            <li>
              <Row icon={<FolderIcon />} tone="text-[var(--accent)]">2 Fandoms</Row>
            </li>
            <li>
              <Row file icon={<FileIcon />} tone="text-[var(--file)]">Current</Row>
            </li>
            <li>
              <Row file icon={<FileIcon />} tone="text-[var(--file)]">Queue</Row>
            </li>
          </ul>
        </li>
        <li>
          <Row icon={<ComicIcon />} tone="text-[#e5ab45]">Comics</Row>
        </li>
        <li>
          <Row icon={<PlayIcon />} tone="text-[#64a164]">D&amp;D Let's Plays</Row>
        </li>
        <li>
          <Row icon={<BookIcon />} tone="text-[#9d5cf0]">Fanfiction</Row>
        </li>
        <li>
          <Row icon={<PadIcon />} tone="text-[#60a363]">Games</Row>
        </li>
        <li>
          <Row icon={<BookIcon />} tone="text-[#708090]">Library</Row>
        </li>
        <li>
          <Row icon={<ReelIcon />} tone="text-[#f25f5f]">Movies</Row>
        </li>
        <li>
          <Row icon={<TvIcon />} tone="text-[#f25f5f]">Shows</Row>
        </li>
      </ul>
    </section>
  );
}

const groups = [
  ["path:/.*Technical/", "#000000"],
  ["path:/.*Meta/", "#f76eff"],
  ["path:/Fanfiction/", "#7c3ca3"],
  ["path:/Library/", "#800090"],
  ["path:/Comics/", "#d6983d"],
  ["path:/Games/", "#65b96f"],
  ["path:/.*Let's Plays/", "#77ffb8"],
  ["path:/Shows/", "#678cd6"],
  ["path:/Movies/", "#586aff"],
];

function Heading({ children, open }: { children: string; open?: boolean }) {
  return (
    <button
      type="button"
      aria-expanded={open ? true : false}
      className="flex h-7 w-full cursor-pointer gap-[7px] pr-[14px] pl-[9px] text-left text-[14px] leading-7 text-[var(--heading)]"
    >
      <span className="flex h-6 w-2 items-center justify-center text-[var(--triangle)]">
        {open ? (
          <Icon w={8} h={6}>
            <path d="M0 0h8L4 6z" />
          </Icon>
        ) : (
          <Icon w={6} h={8}>
            <path d="M0 0v8l6-4z" />
          </Icon>
        )}
      </span>
      <span
        className={
          open
            ? "h-7 flex-1 border-b-2 border-[var(--accent-line)] font-bold"
            : "flex-1 font-semibold"
        }
      >
        {children}
      </span>
    </button>
  );
}

function ControlPanel() {
  return (
    <aside
      aria-label="Graph settings"
      className="absolute top-2 left-2 w-[272px] border border-[var(--line)] bg-[var(--side)] py-2"
    >
      <Heading>Filters</Heading>
      <Heading open>Groups</Heading>
      <div className="mt-[10px] mr-2 ml-[23px] flex flex-col gap-[10px] border-b border-[var(--line)] pb-[10px]">
        {groups.map(([query, color]) => (
          <div key={query} className="flex items-center pr-[7px]">
            <input
              type="text"
              aria-label={`Query for ${query}`}
              defaultValue={query}
              className="h-[30px] min-w-0 flex-1 border border-[var(--line)] bg-transparent pl-[14px] text-[14px] leading-5 text-[var(--ink)] outline-none"
            />
            <input
              type="color"
              aria-label={`Colour for ${query}`}
              defaultValue={color}
              className="mx-2 mb-[2px] size-[22px] shrink-0 cursor-pointer appearance-none rounded-full border-2 border-[var(--line)] bg-transparent p-0 [&::-webkit-color-swatch]:rounded-full [&::-webkit-color-swatch]:border-0 [&::-webkit-color-swatch-wrapper]:p-0"
            />
            <IconButton label={`Remove ${query}`} className="size-[15px]">
              <CrossIcon />
            </IconButton>
          </div>
        ))}
        <button
          type="button"
          className="h-[29px] cursor-pointer self-center bg-[var(--accent)] px-5 text-[14px] leading-5 font-medium text-[#e0d6d2]"
        >
          New group
        </button>
      </div>
      <div className="mt-4">
        <Heading>Display</Heading>
        <Heading>Forces</Heading>
      </div>
    </aside>
  );
}

function ObsidianWindow({ theme }: { theme: string }) {
  return (
    <div className={`flex flex-col bg-[var(--ribbon)] text-[var(--ink)] ${theme}`}>
      <TitleBar />
      <div className="relative flex flex-1">
        <Ribbon />
        <div className="flex w-[300px] shrink-0 flex-col gap-1 bg-[var(--gap)] pr-1">
          <SearchPane />
          <FilePane />
        </div>
        <main className="flex min-w-0 flex-1 flex-col">
          <div className="flex h-9 shrink-0 items-center border-b-2 border-[var(--gap)] bg-linear-to-r from-[var(--head)] to-[var(--ribbon)] bg-clip-padding pr-5 pb-[2px] pl-3">
            <GraphIcon />
            <h2 className="flex-1 pl-4 text-[16px] leading-6 font-semibold">Graph view</h2>
            <IconButton label="Close" className="mr-[17px] size-[15px]">
              <CrossIcon />
            </IconButton>
            <IconButton label="More options" className="size-4">
              <HexIcon />
            </IconButton>
          </div>
          <div className="relative flex-1 overflow-hidden bg-[var(--canvas)]">
            <Graph />
            <ControlPanel />
          </div>
        </main>
        <div className="w-[30px] shrink-0 bg-[var(--ribbon)] pt-7">
          <IconButton label="Expand right sidebar" className="h-11 w-full text-[var(--chevron)]">
            <Chevron />
          </IconButton>
        </div>
        <div className="absolute right-0 bottom-0 flex h-[22px] w-[52px] items-center justify-center border-t border-l border-[var(--status)] bg-[var(--ribbon)] text-[var(--ok)]">
          <CheckIcon />
        </div>
      </div>
    </div>
  );
}

const dark =
  "[--title:#000000] [--ribbon:#0b0e13] [--side:#1b1e25] [--gap:#0b0e13] [--canvas:#0b0e13] [--tab:#0c0f13] [--ink:#aab3d0] [--file-text:#a3acc2] [--heading:#bccbd6] [--hint:#46546d] [--line:#4a3229] [--accent:#e07c42] [--accent-line:#e07c42] [--open:#ddb196] [--file:#954130] [--triangle:#7a5140] [--chevron:#4d6378] [--head:#582510] [--status:#6b2a12] [--ok:#5b9a50] [--tick:#0b0e13] [--node:rgba(115,125,145,0.45)] [--link:rgba(88,36,14,0.15)]";

const light =
  "[--title:#7c4431] [--ribbon:#eef2fe] [--side:#f9fcff] [--gap:#f0f4ff] [--canvas:#f9fcff] [--tab:#f0f4ff] [--ink:#d2976c] [--file-text:#7f8c9d] [--heading:#66737f] [--hint:#56677a] [--line:#cad5e8] [--accent:#e39363] [--accent-line:#e6a886] [--open:#edb395] [--file:#bd5d49] [--triangle:#b5c3da] [--chevron:#46546d] [--head:#ffe8df] [--status:#e39363] [--ok:#147a1c] [--tick:#ffffff] [--node:rgba(120,130,155,0.42)] [--link:rgba(214,217,240,0.15)]";

export default function App() {
  return (
    <div className="grid min-h-screen grid-rows-2 font-[Inter,sans-serif]">
      <ObsidianWindow theme={dark} />
      <ObsidianWindow theme={light} />
    </div>
  );
}
